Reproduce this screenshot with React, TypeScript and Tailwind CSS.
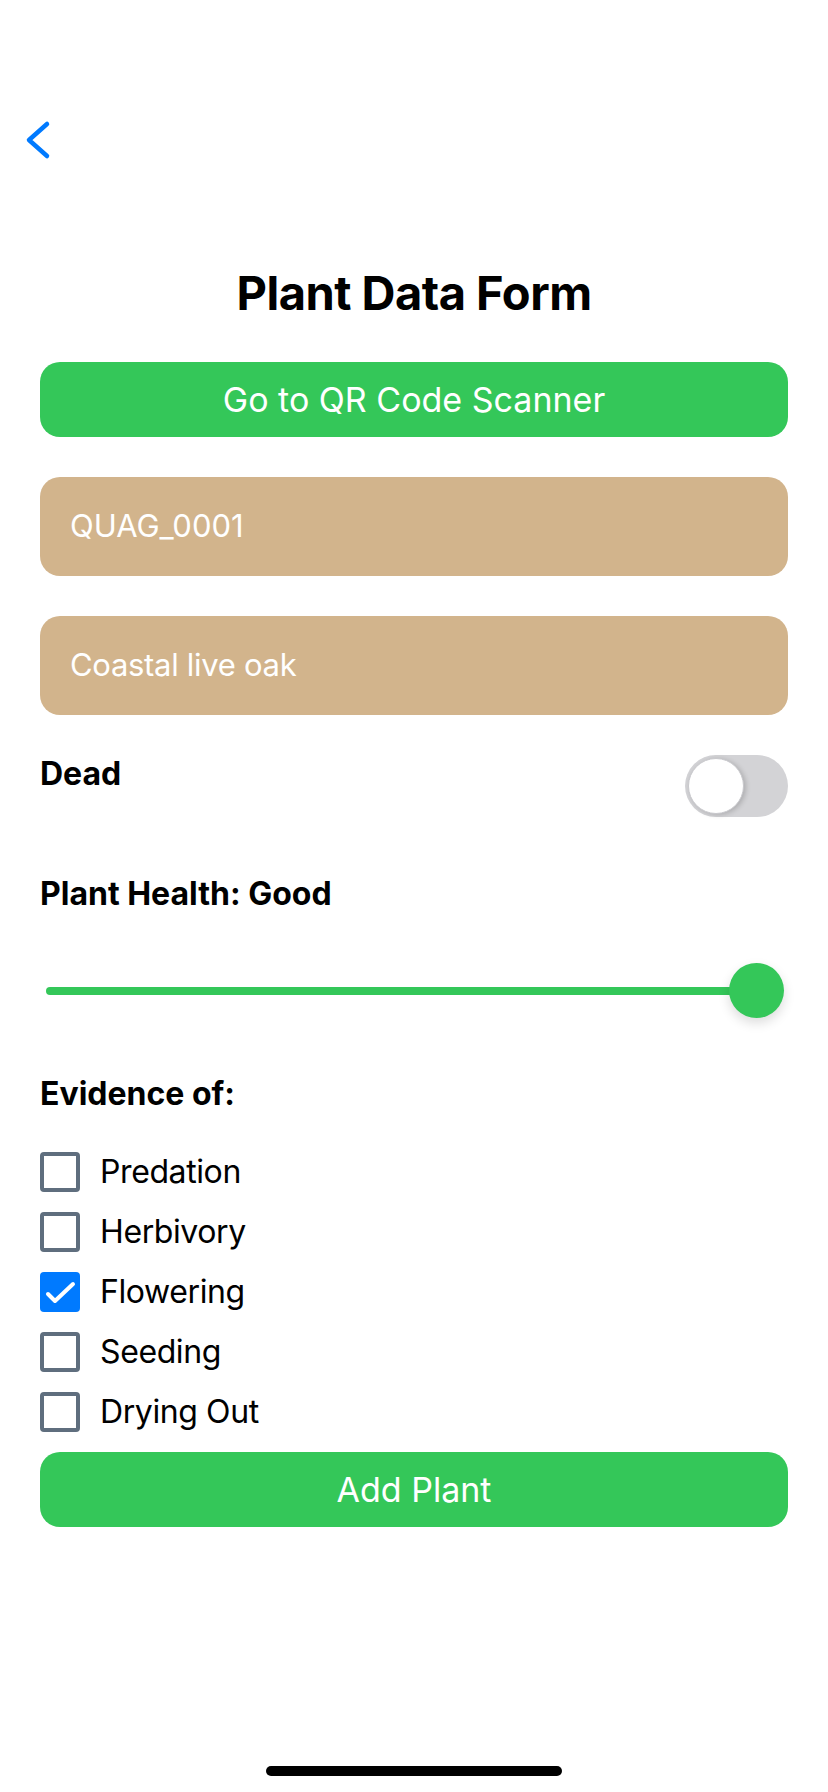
import { useState } from "react";

const evidenceOptions = ["Predation", "Herbivory", "Flowering", "Seeding", "Drying Out"];

const BackChevron = () => (
  <svg width="60" height="40" viewBox="0 0 60 40" fill="none">
    <path
      d="M47 4 L29 20 L47 36"
      stroke="#007aff"
      strokeWidth="4.5"
      strokeLinecap="round"
      strokeLinejoin="round"
    />
  </svg>
);

const Checkbox = ({ checked, onClick }: { checked: boolean; onClick: () => void }) => (
  <button
    onClick={onClick}
    className={
      checked
        ? "w-[40px] h-[40px] rounded-[4px] bg-[#007aff] flex items-center justify-center shrink-0"
        : "w-[40px] h-[40px] rounded-[4px] border-[4px] border-[#5f6e7e] bg-white shrink-0"
    }
  >
    {checked && (
      <svg width="40" height="40" viewBox="0 0 40 40" fill="none">
        <path
          d="M8 27 L15 34 L33 17"
          stroke="white"
          strokeWidth="4"
          strokeLinecap="round"
          strokeLinejoin="round"
          transform="translate(0 -5)"
        />
      </svg>
    )}
  </button>
);

const App = () => {
  const [dead, setDead] = useState(false);
  const [checked, setChecked] = useState<string[]>(["Flowering"]);

  const toggle = (name: string) => {
    setChecked((prev) =>
      prev.includes(name) ? prev.filter((n) => n !== name) : [...prev, name]
    );
  };

  return (
    <div
      className="w-[828px] h-[1792px] bg-white flex flex-col text-black overflow-hidden"
      style={{ fontFamily: "Inter, 'Noto Sans', sans-serif" }}
    >
      <div className="pt-[120px]">
        <BackChevron />
      </div>

      <div className="px-[40px] flex flex-col">
        <h1 className="mt-[109px] text-center text-[47px] leading-[47px] font-bold tracking-[-0.5px]">
          Plant Data Form
        </h1>

        <button className="mt-[46px] h-[75px] rounded-[20px] bg-[#34c759] text-white text-[34px]">
          Go to QR Code Scanner
        </button>

        <div className="mt-[40px] h-[99px] rounded-[20px] bg-[#d2b48c] flex items-center pl-[30px] text-white text-[31px]">
          QUAG_0001
        </div>

        <div className="mt-[40px] h-[99px] rounded-[20px] bg-[#d2b48c] flex items-center pl-[30px] text-white text-[31px] tracking-[-0.3px]">
          Coastal live oak
        </div>

        <div className="mt-[40px] flex justify-between items-start">
          <span className="pt-[3px] text-[32px] leading-[32px] font-bold">Dead</span>
          <button
            onClick={() => setDead(!dead)}
            className={
              dead
                ? "w-[103px] h-[62px] rounded-full bg-[#34c759] p-[3px] flex justify-end"
                : "w-[103px] h-[62px] rounded-full bg-[#d3d3d6] p-[3px] flex justify-start"
            }
          >
            <span className="w-[56px] h-[56px] rounded-full bg-white shadow-[2px_1px_5px_rgba(0,0,0,0.18)] border border-[#c8c8cc]" />
          </button>
        </div>

        <div className="mt-[61px] text-[32px] leading-[32px] font-bold">
          Plant Health: Good
        </div>

        <div className="mt-[53px] h-[55px] relative flex items-center px-[6px]">
          <div className="w-full h-[8px] rounded-full bg-[#34c759]" />
          <div className="absolute right-[4px] top-0 w-[55px] h-[55px] rounded-full bg-[#34c759] shadow-[0_5px_12px_rgba(0,0,0,0.14)]" />
        </div>

        <div className="mt-[60px] text-[32px] leading-[32px] font-bold">
          Evidence of:
        </div>

        <div className="mt-[42px] flex flex-col gap-[20px]">
          {evidenceOptions.map((opt) => (
            <div key={opt} className="flex items-center gap-[20px] h-[40px]">
              <Checkbox checked={checked.includes(opt)} onClick={() => toggle(opt)} />
              <span className="text-[32px] leading-[40px] tracking-[-0.4px]">{opt}</span>
            </div>
          ))}
        </div>

        <button className="mt-[20px] h-[75px] rounded-[20px] bg-[#34c759] text-white text-[34px]">
          Add Plant
        </button>
      </div>

      <div className="mt-auto mb-[16px] flex justify-center">
        <div className="w-[296px] h-[10px] rounded-full bg-black" />
      </div>
    </div>
  );
};

export default App;
